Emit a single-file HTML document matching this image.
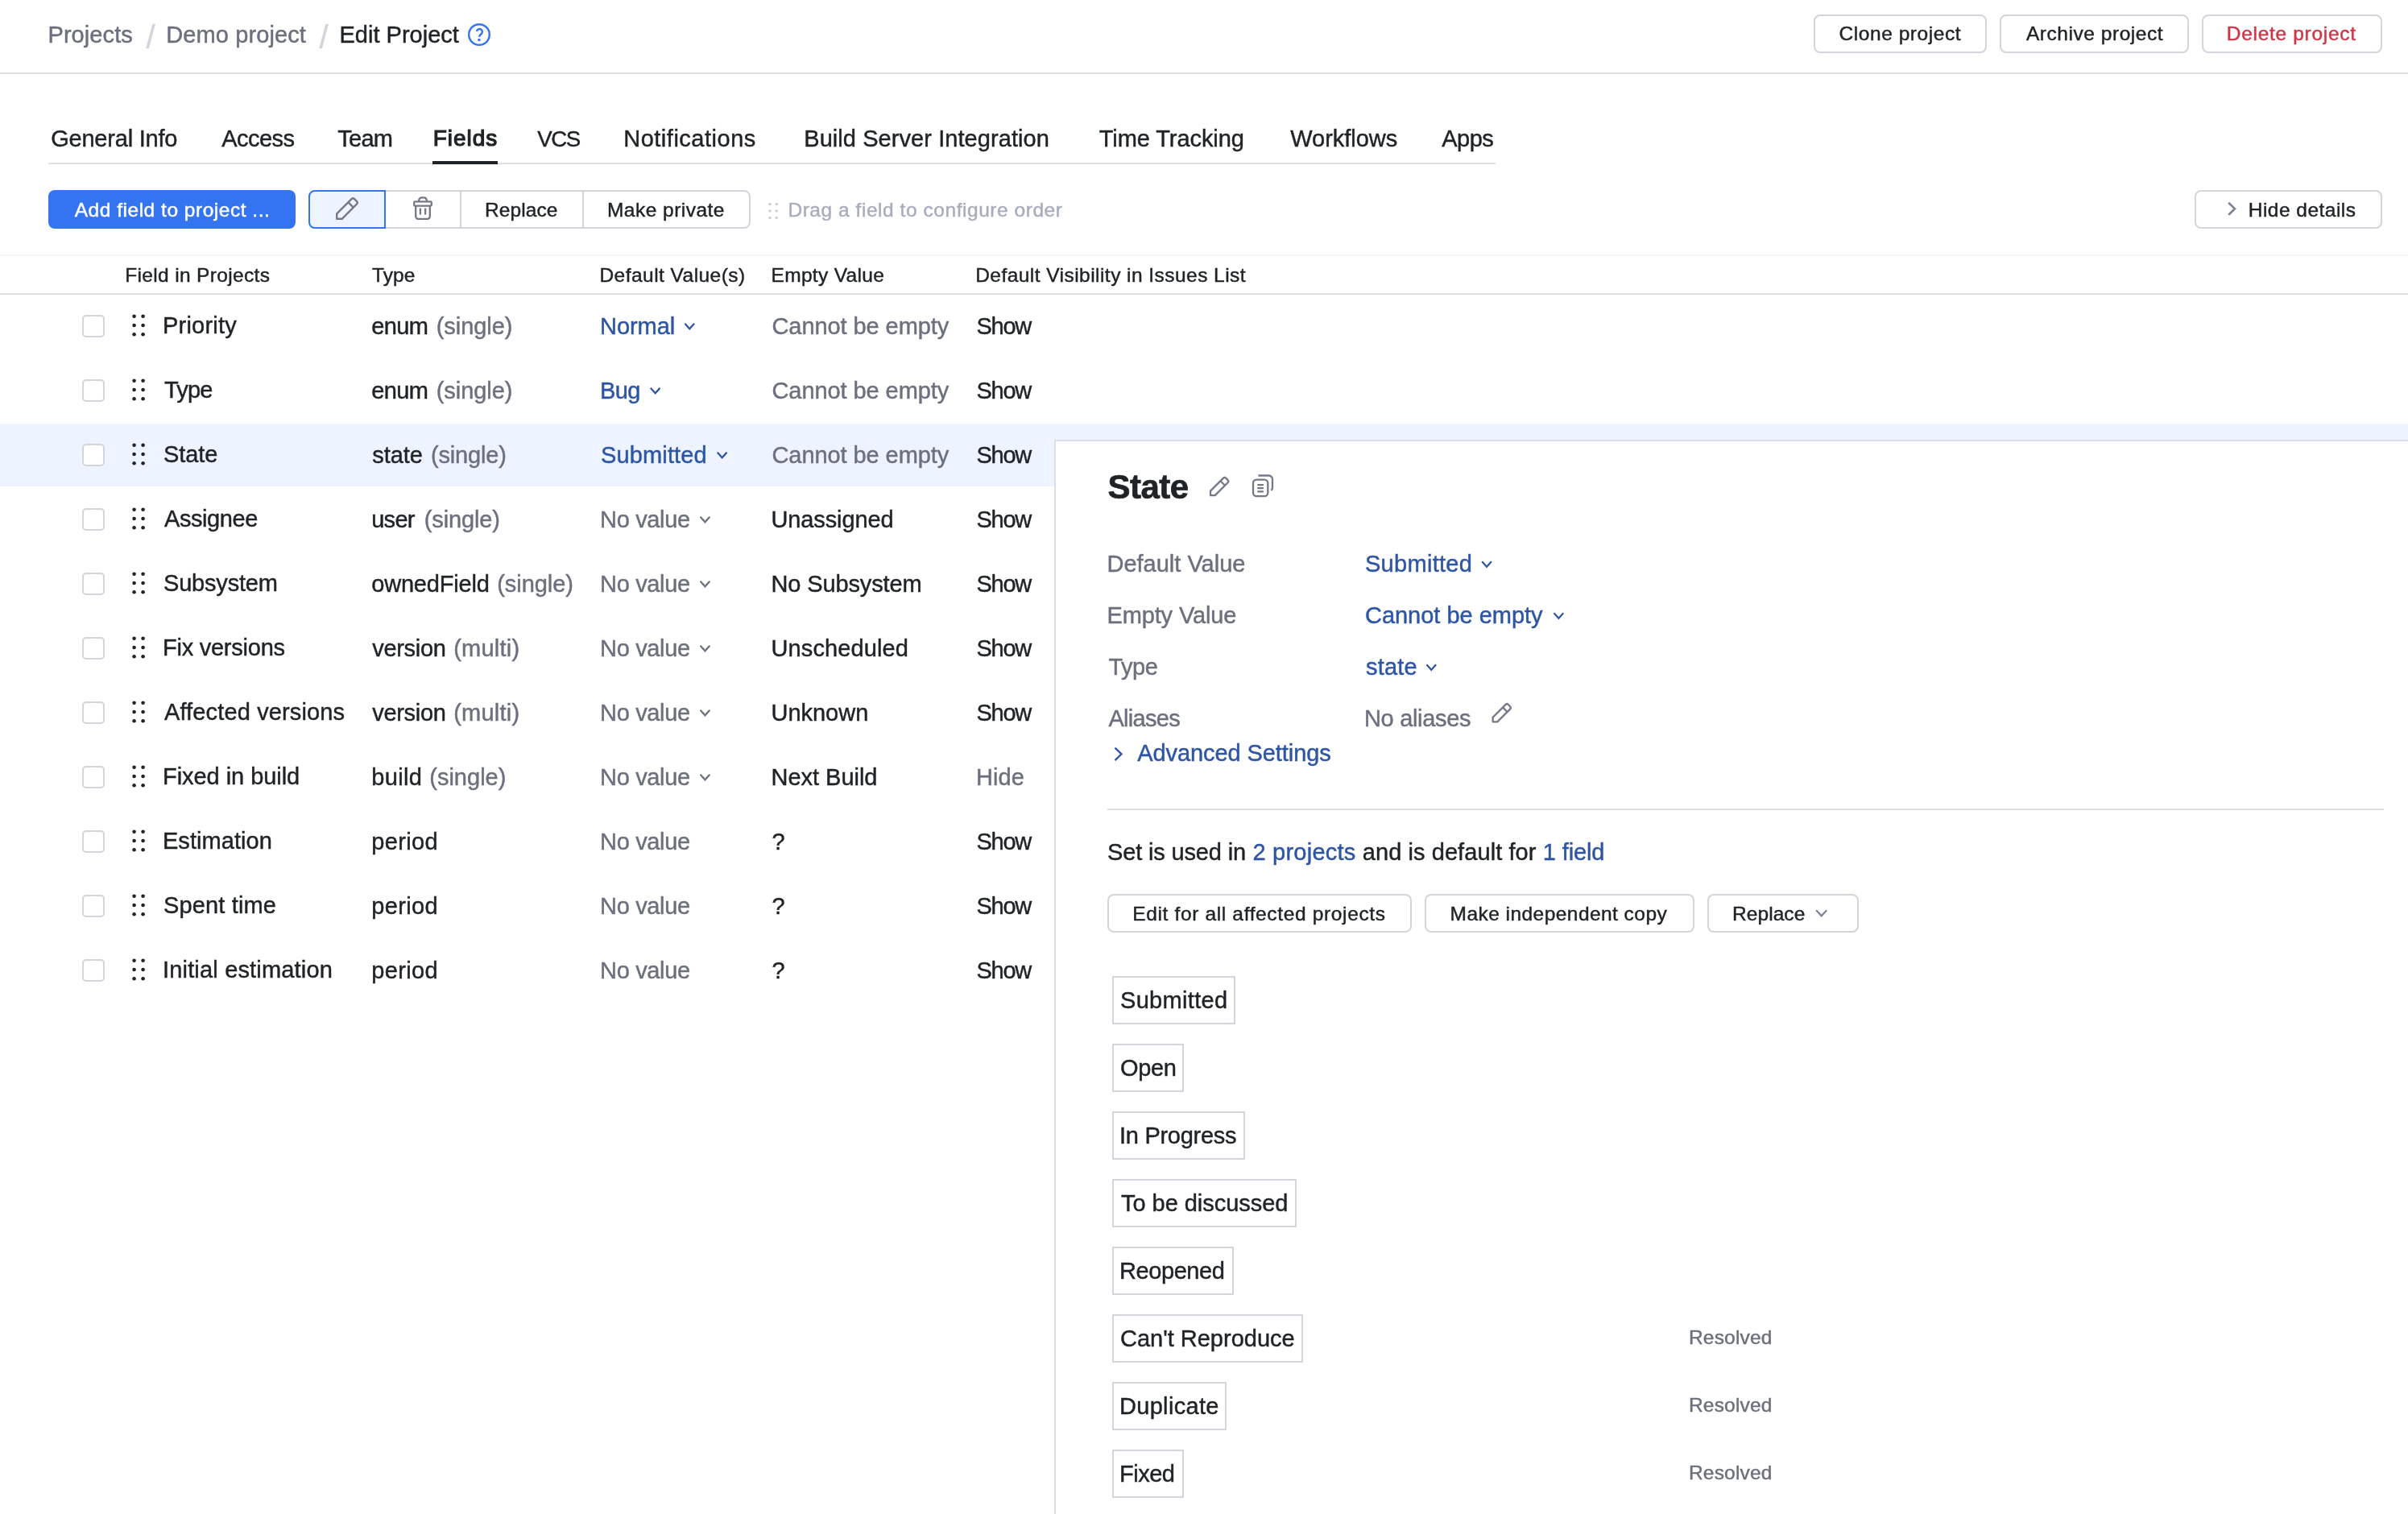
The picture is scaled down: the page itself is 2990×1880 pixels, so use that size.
<!DOCTYPE html>
<html lang="en"><head><meta charset="utf-8"><title>Edit Project - Fields</title>
<style>
html,body{margin:0;padding:0;background:#fff}
@media (max-width:1600px){body{zoom:0.5}}
body{width:2990px;height:1880px;position:relative;overflow:hidden;font-family:"Liberation Sans",sans-serif;color:#1F2326}
.b{position:absolute;box-sizing:content-box}
.btn{border:2px solid #D3D5DB;border-radius:8px;box-sizing:border-box;background:#fff}
.t{position:absolute;white-space:pre;margin:0;padding:0;font-weight:400;-webkit-text-stroke:0.45px currentColor}
svg.ov{position:absolute;left:0;top:0;pointer-events:none}
#txt{position:absolute;left:0;top:0;width:2990px;height:1880px;will-change:transform}
</style></head><body>
<div class="b btn" style="left:2252px;top:18px;width:215px;height:48px;"></div>
<div class="b btn" style="left:2483px;top:18px;width:235px;height:48px;"></div>
<div class="b btn" style="left:2734px;top:18px;width:224px;height:48px;"></div>
<div class="b " style="left:0px;top:90px;width:2990px;height:2px;background:#DFE1E5"></div>
<div class="b " style="left:60px;top:202px;width:1797px;height:2px;background:#DFE1E5"></div>
<div class="b " style="left:537px;top:200px;width:81px;height:4px;background:#1F2326"></div>
<div class="b " style="left:60px;top:236px;width:307px;height:48px;background:#3574F0;border-radius:8px"></div>
<div class="b " style="left:383px;top:236px;width:549px;height:48px;border:2px solid #D3D5DB;border-radius:8px;box-sizing:border-box"></div>
<div class="b " style="left:571px;top:238px;width:2px;height:44px;background:#D3D5DB"></div>
<div class="b " style="left:723px;top:238px;width:2px;height:44px;background:#D3D5DB"></div>
<div class="b " style="left:383px;top:236px;width:96px;height:48px;border:2px solid #3574F0;background:#EDF3FF;border-radius:8px 0 0 8px;box-sizing:border-box"></div>
<div class="b btn" style="left:2725px;top:236px;width:233px;height:48px;"></div>
<div class="b " style="left:0px;top:316px;width:2990px;height:2px;background:#F3F4F6"></div>
<div class="b " style="left:0px;top:364px;width:2990px;height:2px;background:#DFE1E5"></div>
<div class="b " style="left:0px;top:526px;width:2990px;height:78px;background:#EDF3FF"></div>
<div class="b " style="left:102px;top:391px;width:28px;height:28px;border:2px solid #D3D5DB;border-radius:5px;box-sizing:border-box;background:#fff"></div>
<div class="b " style="left:102px;top:471px;width:28px;height:28px;border:2px solid #D3D5DB;border-radius:5px;box-sizing:border-box;background:#fff"></div>
<div class="b " style="left:102px;top:551px;width:28px;height:28px;border:2px solid #D3D5DB;border-radius:5px;box-sizing:border-box;background:#fff"></div>
<div class="b " style="left:102px;top:631px;width:28px;height:28px;border:2px solid #D3D5DB;border-radius:5px;box-sizing:border-box;background:#fff"></div>
<div class="b " style="left:102px;top:711px;width:28px;height:28px;border:2px solid #D3D5DB;border-radius:5px;box-sizing:border-box;background:#fff"></div>
<div class="b " style="left:102px;top:791px;width:28px;height:28px;border:2px solid #D3D5DB;border-radius:5px;box-sizing:border-box;background:#fff"></div>
<div class="b " style="left:102px;top:871px;width:28px;height:28px;border:2px solid #D3D5DB;border-radius:5px;box-sizing:border-box;background:#fff"></div>
<div class="b " style="left:102px;top:951px;width:28px;height:28px;border:2px solid #D3D5DB;border-radius:5px;box-sizing:border-box;background:#fff"></div>
<div class="b " style="left:102px;top:1031px;width:28px;height:28px;border:2px solid #D3D5DB;border-radius:5px;box-sizing:border-box;background:#fff"></div>
<div class="b " style="left:102px;top:1111px;width:28px;height:28px;border:2px solid #D3D5DB;border-radius:5px;box-sizing:border-box;background:#fff"></div>
<div class="b " style="left:102px;top:1191px;width:28px;height:28px;border:2px solid #D3D5DB;border-radius:5px;box-sizing:border-box;background:#fff"></div>
<div class="b " style="left:1309px;top:546px;width:1700px;height:1400px;background:#fff;border:2px solid #DCDEE3;box-sizing:border-box"></div>
<div class="b " style="left:1375px;top:1004px;width:1585px;height:2px;background:#DFE1E5"></div>
<div class="b btn" style="left:1375px;top:1110px;width:377.5px;height:48px;"></div>
<div class="b btn" style="left:1769px;top:1110px;width:335px;height:48px;"></div>
<div class="b btn" style="left:2120px;top:1110px;width:188px;height:48px;"></div>
<div class="b " style="left:1381px;top:1212px;width:153px;height:59.5px;border:2px solid #D3D5DB;box-sizing:border-box"></div>
<div class="b " style="left:1381px;top:1296px;width:89px;height:59.5px;border:2px solid #D3D5DB;box-sizing:border-box"></div>
<div class="b " style="left:1381px;top:1380px;width:165px;height:59.5px;border:2px solid #D3D5DB;box-sizing:border-box"></div>
<div class="b " style="left:1381px;top:1464px;width:229px;height:59.5px;border:2px solid #D3D5DB;box-sizing:border-box"></div>
<div class="b " style="left:1381px;top:1548px;width:151px;height:59.5px;border:2px solid #D3D5DB;box-sizing:border-box"></div>
<div class="b " style="left:1381px;top:1632px;width:237px;height:59.5px;border:2px solid #D3D5DB;box-sizing:border-box"></div>
<div class="b " style="left:1381px;top:1716px;width:142px;height:59.5px;border:2px solid #D3D5DB;box-sizing:border-box"></div>
<div class="b " style="left:1381px;top:1800px;width:89px;height:59.5px;border:2px solid #D3D5DB;box-sizing:border-box"></div>
<svg class="ov" width="2990" height="1880" viewBox="0 0 2990 1880">
<circle cx="595" cy="43" r="12.8" fill="none" stroke="#3574F0" stroke-width="2.4"/>
<path d="M592 38.9 a3.45 3.45 0 1 1 5.9 2.9 c-1.4 1.3 -2.6 2.2 -3 4" fill="none" stroke="#3574F0" stroke-width="2.4"/>
<circle cx="594.9" cy="49.5" r="1.8" fill="#3574F0"/>
<g transform="translate(417,245) scale(1.0)" fill="none" stroke="#747889" stroke-width="2.40" stroke-linejoin="round"><path d="M1.2 20.4 L19.5 2.1 a2.6 2.6 0 0 1 3.6 0 L25.9 4.9 a2.6 2.6 0 0 1 0 3.6 L7.6 26.8 H1.2 Z"/><path d="M15.4 6.2 L21.8 12.6"/></g>
<g transform="translate(513,244.2)" fill="none" stroke="#747889" stroke-width="2.3" stroke-linejoin="round"><path d="M7.2 6 V4.6 a3.4 3.4 0 0 1 3.4 -3.4 h2.8 a3.4 3.4 0 0 1 3.4 3.4 V6"/><rect x="1.2" y="6.2" width="21.6" height="5.2" rx="1"/><path d="M3.2 11.6 V24.6 a3 3 0 0 0 3 3 h11.6 a3 3 0 0 0 3 -3 V11.6"/><path d="M8.9 14.4 V22.4 M15.1 14.4 V22.4"/></g>
<circle cx="955.9" cy="253.4" r="1.7" fill="#C9CCD6"/>
<circle cx="955.9" cy="261.9" r="1.7" fill="#C9CCD6"/>
<circle cx="955.9" cy="270.4" r="1.7" fill="#C9CCD6"/>
<circle cx="964.3" cy="253.4" r="1.7" fill="#C9CCD6"/>
<circle cx="964.3" cy="261.9" r="1.7" fill="#C9CCD6"/>
<circle cx="964.3" cy="270.4" r="1.7" fill="#C9CCD6"/>
<polyline points="2767.20,251.80 2775.00,259.30 2767.20,266.80" fill="none" stroke="#7E8296" stroke-width="2.6"/>
<circle cx="166.6" cy="392.7" r="2.3" fill="#1F2326"/>
<circle cx="166.6" cy="404.0" r="2.3" fill="#1F2326"/>
<circle cx="166.6" cy="415.3" r="2.3" fill="#1F2326"/>
<circle cx="177.6" cy="392.7" r="2.3" fill="#1F2326"/>
<circle cx="177.6" cy="404.0" r="2.3" fill="#1F2326"/>
<circle cx="177.6" cy="415.3" r="2.3" fill="#1F2326"/>
<polyline points="850.40,401.70 856.25,408.30 862.10,401.70" fill="none" stroke="#2E55A3" stroke-width="2.2"/>
<circle cx="166.6" cy="472.7" r="2.3" fill="#1F2326"/>
<circle cx="166.6" cy="484.0" r="2.3" fill="#1F2326"/>
<circle cx="166.6" cy="495.3" r="2.3" fill="#1F2326"/>
<circle cx="177.6" cy="472.7" r="2.3" fill="#1F2326"/>
<circle cx="177.6" cy="484.0" r="2.3" fill="#1F2326"/>
<circle cx="177.6" cy="495.3" r="2.3" fill="#1F2326"/>
<polyline points="807.80,481.70 813.65,488.30 819.50,481.70" fill="none" stroke="#2E55A3" stroke-width="2.2"/>
<circle cx="166.6" cy="552.7" r="2.3" fill="#1F2326"/>
<circle cx="166.6" cy="564.0" r="2.3" fill="#1F2326"/>
<circle cx="166.6" cy="575.3" r="2.3" fill="#1F2326"/>
<circle cx="177.6" cy="552.7" r="2.3" fill="#1F2326"/>
<circle cx="177.6" cy="564.0" r="2.3" fill="#1F2326"/>
<circle cx="177.6" cy="575.3" r="2.3" fill="#1F2326"/>
<polyline points="890.80,561.70 896.65,568.30 902.50,561.70" fill="none" stroke="#2E55A3" stroke-width="2.2"/>
<circle cx="166.6" cy="632.7" r="2.3" fill="#1F2326"/>
<circle cx="166.6" cy="644.0" r="2.3" fill="#1F2326"/>
<circle cx="166.6" cy="655.3" r="2.3" fill="#1F2326"/>
<circle cx="177.6" cy="632.7" r="2.3" fill="#1F2326"/>
<circle cx="177.6" cy="644.0" r="2.3" fill="#1F2326"/>
<circle cx="177.6" cy="655.3" r="2.3" fill="#1F2326"/>
<polyline points="869.60,641.70 875.45,648.30 881.30,641.70" fill="none" stroke="#6C707E" stroke-width="2.2"/>
<circle cx="166.6" cy="712.7" r="2.3" fill="#1F2326"/>
<circle cx="166.6" cy="724.0" r="2.3" fill="#1F2326"/>
<circle cx="166.6" cy="735.3" r="2.3" fill="#1F2326"/>
<circle cx="177.6" cy="712.7" r="2.3" fill="#1F2326"/>
<circle cx="177.6" cy="724.0" r="2.3" fill="#1F2326"/>
<circle cx="177.6" cy="735.3" r="2.3" fill="#1F2326"/>
<polyline points="869.60,721.70 875.45,728.30 881.30,721.70" fill="none" stroke="#6C707E" stroke-width="2.2"/>
<circle cx="166.6" cy="792.7" r="2.3" fill="#1F2326"/>
<circle cx="166.6" cy="804.0" r="2.3" fill="#1F2326"/>
<circle cx="166.6" cy="815.3" r="2.3" fill="#1F2326"/>
<circle cx="177.6" cy="792.7" r="2.3" fill="#1F2326"/>
<circle cx="177.6" cy="804.0" r="2.3" fill="#1F2326"/>
<circle cx="177.6" cy="815.3" r="2.3" fill="#1F2326"/>
<polyline points="869.60,801.70 875.45,808.30 881.30,801.70" fill="none" stroke="#6C707E" stroke-width="2.2"/>
<circle cx="166.6" cy="872.7" r="2.3" fill="#1F2326"/>
<circle cx="166.6" cy="884.0" r="2.3" fill="#1F2326"/>
<circle cx="166.6" cy="895.3" r="2.3" fill="#1F2326"/>
<circle cx="177.6" cy="872.7" r="2.3" fill="#1F2326"/>
<circle cx="177.6" cy="884.0" r="2.3" fill="#1F2326"/>
<circle cx="177.6" cy="895.3" r="2.3" fill="#1F2326"/>
<polyline points="869.60,881.70 875.45,888.30 881.30,881.70" fill="none" stroke="#6C707E" stroke-width="2.2"/>
<circle cx="166.6" cy="952.7" r="2.3" fill="#1F2326"/>
<circle cx="166.6" cy="964.0" r="2.3" fill="#1F2326"/>
<circle cx="166.6" cy="975.3" r="2.3" fill="#1F2326"/>
<circle cx="177.6" cy="952.7" r="2.3" fill="#1F2326"/>
<circle cx="177.6" cy="964.0" r="2.3" fill="#1F2326"/>
<circle cx="177.6" cy="975.3" r="2.3" fill="#1F2326"/>
<polyline points="869.60,961.70 875.45,968.30 881.30,961.70" fill="none" stroke="#6C707E" stroke-width="2.2"/>
<circle cx="166.6" cy="1032.7" r="2.3" fill="#1F2326"/>
<circle cx="166.6" cy="1044.0" r="2.3" fill="#1F2326"/>
<circle cx="166.6" cy="1055.3" r="2.3" fill="#1F2326"/>
<circle cx="177.6" cy="1032.7" r="2.3" fill="#1F2326"/>
<circle cx="177.6" cy="1044.0" r="2.3" fill="#1F2326"/>
<circle cx="177.6" cy="1055.3" r="2.3" fill="#1F2326"/>
<circle cx="166.6" cy="1112.7" r="2.3" fill="#1F2326"/>
<circle cx="166.6" cy="1124.0" r="2.3" fill="#1F2326"/>
<circle cx="166.6" cy="1135.3" r="2.3" fill="#1F2326"/>
<circle cx="177.6" cy="1112.7" r="2.3" fill="#1F2326"/>
<circle cx="177.6" cy="1124.0" r="2.3" fill="#1F2326"/>
<circle cx="177.6" cy="1135.3" r="2.3" fill="#1F2326"/>
<circle cx="166.6" cy="1192.7" r="2.3" fill="#1F2326"/>
<circle cx="166.6" cy="1204.0" r="2.3" fill="#1F2326"/>
<circle cx="166.6" cy="1215.3" r="2.3" fill="#1F2326"/>
<circle cx="177.6" cy="1192.7" r="2.3" fill="#1F2326"/>
<circle cx="177.6" cy="1204.0" r="2.3" fill="#1F2326"/>
<circle cx="177.6" cy="1215.3" r="2.3" fill="#1F2326"/>
<g transform="translate(1502,591.8) scale(0.8714285714285713)" fill="none" stroke="#747889" stroke-width="2.64" stroke-linejoin="round"><path d="M1.2 20.4 L19.5 2.1 a2.6 2.6 0 0 1 3.6 0 L25.9 4.9 a2.6 2.6 0 0 1 0 3.6 L7.6 26.8 H1.2 Z"/><path d="M15.4 6.2 L21.8 12.6"/></g>
<g transform="translate(1555,589.3)" fill="none" stroke="#747889" stroke-width="2.3"><rect x="1" y="6.3" width="18.3" height="20.5" rx="4.2"/><path d="M7.4 1.2 H20.4 a4.6 4.6 0 0 1 4.6 4.6 V16 a4.6 4.6 0 0 1 -1.6 3.6" stroke-linecap="butt"/><path d="M6.3 12.9 H13.9 M6.3 16.9 H13.9 M6.3 21 H13.9"/></g>
<polyline points="1840.20,697.20 1846.05,703.80 1851.90,697.20" fill="none" stroke="#2E55A3" stroke-width="2.2"/>
<polyline points="1929.50,761.20 1935.35,767.80 1941.20,761.20" fill="none" stroke="#2E55A3" stroke-width="2.2"/>
<polyline points="1771.40,825.20 1777.25,831.80 1783.10,825.20" fill="none" stroke="#2E55A3" stroke-width="2.2"/>
<g transform="translate(1852.6,873) scale(0.8714285714285713)" fill="none" stroke="#747889" stroke-width="2.64" stroke-linejoin="round"><path d="M1.2 20.4 L19.5 2.1 a2.6 2.6 0 0 1 3.6 0 L25.9 4.9 a2.6 2.6 0 0 1 0 3.6 L7.6 26.8 H1.2 Z"/><path d="M15.4 6.2 L21.8 12.6"/></g>
<polyline points="1384.50,928.55 1392.50,936.30 1384.50,944.05" fill="none" stroke="#2E55A3" stroke-width="2.3"/>
<polyline points="2255.20,1130.30 2261.70,1137.30 2268.20,1130.30" fill="none" stroke="#7E8296" stroke-width="2.2"/>
</svg>
<div id="txt">
<span class="t" style="left:59.48px;top:27px;font-size:29px;line-height:32px;letter-spacing:0.078px;color:#6C707E">Projects</span>
<span class="t" style="left:181.42px;top:24px;font-size:40px;line-height:44px;letter-spacing:0.000px;color:#D3D5DB">/</span>
<span class="t" style="left:206.22px;top:27px;font-size:29px;line-height:32px;letter-spacing:0.105px;color:#6C707E">Demo project</span>
<span class="t" style="left:396.53px;top:24px;font-size:40px;line-height:44px;letter-spacing:0.000px;color:#D3D5DB">/</span>
<span class="t" style="left:421.48px;top:27px;font-size:29px;line-height:32px;letter-spacing:0.007px;color:#1F2326">Edit Project</span>
<span class="t" style="left:2283.53px;top:28px;font-size:24.5px;line-height:27px;letter-spacing:0.558px;color:#1F2326">Clone project</span>
<span class="t" style="left:2515.92px;top:28px;font-size:24.5px;line-height:27px;letter-spacing:0.544px;color:#1F2326">Archive project</span>
<span class="t" style="left:2764.82px;top:28px;font-size:24.5px;line-height:27px;letter-spacing:0.692px;color:#CC3645">Delete project</span>
<span class="t" style="left:63.23px;top:156px;font-size:29px;line-height:32px;letter-spacing:-0.220px;color:#1F2326">General Info</span>
<span class="t" style="left:275.23px;top:156px;font-size:29px;line-height:32px;letter-spacing:-0.534px;color:#1F2326">Access</span>
<span class="t" style="left:419.23px;top:156px;font-size:29px;line-height:32px;letter-spacing:-0.736px;color:#1F2326">Team</span>
<span class="t" style="left:537.80px;top:156px;font-size:28px;line-height:31px;letter-spacing:0.942px;color:#1F2326;-webkit-text-stroke-width:1.2px">Fields</span>
<span class="t" style="left:667.23px;top:157px;font-size:27.6px;line-height:31px;letter-spacing:-1.391px;color:#1F2326">VCS</span>
<span class="t" style="left:774.23px;top:156px;font-size:29px;line-height:32px;letter-spacing:0.508px;color:#1F2326">Notifications</span>
<span class="t" style="left:998.23px;top:156px;font-size:29px;line-height:32px;letter-spacing:0.071px;color:#1F2326">Build Server Integration</span>
<span class="t" style="left:1364.72px;top:156px;font-size:29px;line-height:32px;letter-spacing:-0.072px;color:#1F2326">Time Tracking</span>
<span class="t" style="left:1602.22px;top:156px;font-size:29px;line-height:32px;letter-spacing:-0.019px;color:#1F2326">Workflows</span>
<span class="t" style="left:1790.22px;top:156px;font-size:29px;line-height:32px;letter-spacing:-0.517px;color:#1F2326">Apps</span>
<span class="t" style="left:92.72px;top:247px;font-size:24.5px;line-height:27px;letter-spacing:0.520px;color:#FFFFFF">Add field to project ...</span>
<span class="t" style="left:601.98px;top:247px;font-size:24.5px;line-height:27px;letter-spacing:0.089px;color:#1F2326">Replace</span>
<span class="t" style="left:753.98px;top:247px;font-size:24.5px;line-height:27px;letter-spacing:0.470px;color:#1F2326">Make private</span>
<span class="t" style="left:978.43px;top:247px;font-size:24.5px;line-height:27px;letter-spacing:0.546px;color:#A8ADBD">Drag a field to configure order</span>
<span class="t" style="left:2791.72px;top:247px;font-size:24.5px;line-height:27px;letter-spacing:0.480px;color:#1F2326">Hide details</span>
<span class="t" style="left:155.22px;top:328px;font-size:24.5px;line-height:27px;letter-spacing:0.345px;color:#1F2326">Field in Projects</span>
<span class="t" style="left:461.98px;top:328px;font-size:24.5px;line-height:27px;letter-spacing:0.103px;color:#1F2326">Type</span>
<span class="t" style="left:744.48px;top:328px;font-size:24.5px;line-height:27px;letter-spacing:0.458px;color:#1F2326">Default Value(s)</span>
<span class="t" style="left:957.48px;top:328px;font-size:24.5px;line-height:27px;letter-spacing:0.334px;color:#1F2326">Empty Value</span>
<span class="t" style="left:1211.22px;top:328px;font-size:24.5px;line-height:27px;letter-spacing:0.452px;color:#1F2326">Default Visibility in Issues List</span>
<span class="t" style="left:201.97px;top:388px;font-size:29px;line-height:32px;letter-spacing:0.224px;color:#1F2326">Priority</span>
<span class="t" style="left:461.23px;top:389px;font-size:29px;line-height:32px;letter-spacing:-0.612px;color:#1F2326">enum</span>
<span class="t" style="left:541.73px;top:389px;font-size:29px;line-height:32px;letter-spacing:-0.054px;color:#6C707E">(single)</span>
<span class="t" style="left:745.02px;top:389px;font-size:29px;line-height:32px;letter-spacing:-0.053px;color:#2E55A3">Normal</span>
<span class="t" style="left:958.48px;top:389px;font-size:29px;line-height:32px;letter-spacing:-0.075px;color:#6C707E">Cannot be empty</span>
<span class="t" style="left:1212.52px;top:389px;font-size:29px;line-height:32px;letter-spacing:-1.250px;color:#1F2326">Show</span>
<span class="t" style="left:203.97px;top:468px;font-size:29px;line-height:32px;letter-spacing:-0.814px;color:#1F2326">Type</span>
<span class="t" style="left:461.23px;top:469px;font-size:29px;line-height:32px;letter-spacing:-0.612px;color:#1F2326">enum</span>
<span class="t" style="left:541.73px;top:469px;font-size:29px;line-height:32px;letter-spacing:-0.054px;color:#6C707E">(single)</span>
<span class="t" style="left:745.02px;top:469px;font-size:29px;line-height:32px;letter-spacing:-0.611px;color:#2E55A3">Bug</span>
<span class="t" style="left:958.48px;top:469px;font-size:29px;line-height:32px;letter-spacing:-0.075px;color:#6C707E">Cannot be empty</span>
<span class="t" style="left:1212.52px;top:469px;font-size:29px;line-height:32px;letter-spacing:-1.250px;color:#1F2326">Show</span>
<span class="t" style="left:202.97px;top:548px;font-size:29px;line-height:32px;letter-spacing:-0.071px;color:#1F2326">State</span>
<span class="t" style="left:462.23px;top:549px;font-size:29px;line-height:32px;letter-spacing:-0.048px;color:#1F2326">state</span>
<span class="t" style="left:534.98px;top:549px;font-size:29px;line-height:32px;letter-spacing:-0.161px;color:#6C707E">(single)</span>
<span class="t" style="left:746.02px;top:549px;font-size:29px;line-height:32px;letter-spacing:0.132px;color:#2E55A3">Submitted</span>
<span class="t" style="left:958.48px;top:549px;font-size:29px;line-height:32px;letter-spacing:-0.075px;color:#6C707E">Cannot be empty</span>
<span class="t" style="left:1212.52px;top:549px;font-size:29px;line-height:32px;letter-spacing:-1.250px;color:#1F2326">Show</span>
<span class="t" style="left:203.97px;top:628px;font-size:29px;line-height:32px;letter-spacing:-0.410px;color:#1F2326">Assignee</span>
<span class="t" style="left:461.23px;top:629px;font-size:29px;line-height:32px;letter-spacing:-0.736px;color:#1F2326">user</span>
<span class="t" style="left:526.73px;top:629px;font-size:29px;line-height:32px;letter-spacing:-0.125px;color:#6C707E">(single)</span>
<span class="t" style="left:745.02px;top:629px;font-size:29px;line-height:32px;letter-spacing:-0.333px;color:#6C707E">No value</span>
<span class="t" style="left:957.48px;top:629px;font-size:29px;line-height:32px;letter-spacing:-0.109px;color:#1F2326">Unassigned</span>
<span class="t" style="left:1212.52px;top:629px;font-size:29px;line-height:32px;letter-spacing:-1.250px;color:#1F2326">Show</span>
<span class="t" style="left:202.97px;top:708px;font-size:29px;line-height:32px;letter-spacing:-0.186px;color:#1F2326">Subsystem</span>
<span class="t" style="left:461.23px;top:709px;font-size:29px;line-height:32px;letter-spacing:-0.182px;color:#1F2326">ownedField</span>
<span class="t" style="left:617.23px;top:709px;font-size:29px;line-height:32px;letter-spacing:-0.054px;color:#6C707E">(single)</span>
<span class="t" style="left:745.02px;top:709px;font-size:29px;line-height:32px;letter-spacing:-0.333px;color:#6C707E">No value</span>
<span class="t" style="left:957.48px;top:709px;font-size:29px;line-height:32px;letter-spacing:-0.124px;color:#1F2326">No Subsystem</span>
<span class="t" style="left:1212.52px;top:709px;font-size:29px;line-height:32px;letter-spacing:-1.250px;color:#1F2326">Show</span>
<span class="t" style="left:201.97px;top:788px;font-size:29px;line-height:32px;letter-spacing:-0.241px;color:#1F2326">Fix versions</span>
<span class="t" style="left:462.23px;top:789px;font-size:29px;line-height:32px;letter-spacing:-0.301px;color:#1F2326">version</span>
<span class="t" style="left:563.23px;top:789px;font-size:29px;line-height:32px;letter-spacing:0.236px;color:#6C707E">(multi)</span>
<span class="t" style="left:745.02px;top:789px;font-size:29px;line-height:32px;letter-spacing:-0.333px;color:#6C707E">No value</span>
<span class="t" style="left:957.48px;top:789px;font-size:29px;line-height:32px;letter-spacing:0.114px;color:#1F2326">Unscheduled</span>
<span class="t" style="left:1212.52px;top:789px;font-size:29px;line-height:32px;letter-spacing:-1.250px;color:#1F2326">Show</span>
<span class="t" style="left:203.97px;top:868px;font-size:29px;line-height:32px;letter-spacing:0.136px;color:#1F2326">Affected versions</span>
<span class="t" style="left:462.23px;top:869px;font-size:29px;line-height:32px;letter-spacing:-0.301px;color:#1F2326">version</span>
<span class="t" style="left:563.23px;top:869px;font-size:29px;line-height:32px;letter-spacing:0.236px;color:#6C707E">(multi)</span>
<span class="t" style="left:745.02px;top:869px;font-size:29px;line-height:32px;letter-spacing:-0.333px;color:#6C707E">No value</span>
<span class="t" style="left:957.48px;top:869px;font-size:29px;line-height:32px;letter-spacing:-0.012px;color:#1F2326">Unknown</span>
<span class="t" style="left:1212.52px;top:869px;font-size:29px;line-height:32px;letter-spacing:-1.250px;color:#1F2326">Show</span>
<span class="t" style="left:201.97px;top:948px;font-size:29px;line-height:32px;letter-spacing:-0.049px;color:#1F2326">Fixed in build</span>
<span class="t" style="left:461.23px;top:949px;font-size:29px;line-height:32px;letter-spacing:0.352px;color:#1F2326">build</span>
<span class="t" style="left:533.23px;top:949px;font-size:29px;line-height:32px;letter-spacing:0.017px;color:#6C707E">(single)</span>
<span class="t" style="left:745.02px;top:949px;font-size:29px;line-height:32px;letter-spacing:-0.333px;color:#6C707E">No value</span>
<span class="t" style="left:957.48px;top:949px;font-size:29px;line-height:32px;letter-spacing:-0.016px;color:#1F2326">Next Build</span>
<span class="t" style="left:1212.02px;top:949px;font-size:29px;line-height:32px;letter-spacing:0.079px;color:#6C707E">Hide</span>
<span class="t" style="left:201.97px;top:1028px;font-size:29px;line-height:32px;letter-spacing:0.060px;color:#1F2326">Estimation</span>
<span class="t" style="left:461.23px;top:1029px;font-size:29px;line-height:32px;letter-spacing:0.353px;color:#1F2326">period</span>
<span class="t" style="left:745.02px;top:1029px;font-size:29px;line-height:32px;letter-spacing:-0.333px;color:#6C707E">No value</span>
<span class="t" style="left:958.48px;top:1029px;font-size:29px;line-height:32px;letter-spacing:0.000px;color:#1F2326">?</span>
<span class="t" style="left:1212.52px;top:1029px;font-size:29px;line-height:32px;letter-spacing:-1.250px;color:#1F2326">Show</span>
<span class="t" style="left:202.97px;top:1108px;font-size:29px;line-height:32px;letter-spacing:0.144px;color:#1F2326">Spent time</span>
<span class="t" style="left:461.23px;top:1109px;font-size:29px;line-height:32px;letter-spacing:0.353px;color:#1F2326">period</span>
<span class="t" style="left:745.02px;top:1109px;font-size:29px;line-height:32px;letter-spacing:-0.333px;color:#6C707E">No value</span>
<span class="t" style="left:958.48px;top:1109px;font-size:29px;line-height:32px;letter-spacing:0.000px;color:#1F2326">?</span>
<span class="t" style="left:1212.52px;top:1109px;font-size:29px;line-height:32px;letter-spacing:-1.250px;color:#1F2326">Show</span>
<span class="t" style="left:201.97px;top:1188px;font-size:29px;line-height:32px;letter-spacing:0.177px;color:#1F2326">Initial estimation</span>
<span class="t" style="left:461.23px;top:1189px;font-size:29px;line-height:32px;letter-spacing:0.353px;color:#1F2326">period</span>
<span class="t" style="left:745.02px;top:1189px;font-size:29px;line-height:32px;letter-spacing:-0.333px;color:#6C707E">No value</span>
<span class="t" style="left:958.48px;top:1189px;font-size:29px;line-height:32px;letter-spacing:0.000px;color:#1F2326">?</span>
<span class="t" style="left:1212.52px;top:1189px;font-size:29px;line-height:32px;letter-spacing:-1.250px;color:#1F2326">Show</span>
<h2 class="t" style="left:1375.55px;top:581px;font-size:42px;line-height:47px;letter-spacing:-0.561px;color:#1F2326;font-weight:700;-webkit-text-stroke-width:0.7px">State</h2>
<span class="t" style="left:1374.47px;top:684px;font-size:29px;line-height:32px;letter-spacing:-0.003px;color:#6C707E">Default Value</span>
<span class="t" style="left:1374.47px;top:748px;font-size:29px;line-height:32px;letter-spacing:-0.133px;color:#6C707E">Empty Value</span>
<span class="t" style="left:1376.47px;top:812px;font-size:29px;line-height:32px;letter-spacing:-0.481px;color:#6C707E">Type</span>
<span class="t" style="left:1376.47px;top:876px;font-size:29px;line-height:32px;letter-spacing:-0.698px;color:#6C707E">Aliases</span>
<span class="t" style="left:1694.97px;top:684px;font-size:29px;line-height:32px;letter-spacing:0.295px;color:#2E55A3">Submitted</span>
<span class="t" style="left:1694.97px;top:748px;font-size:29px;line-height:32px;letter-spacing:-0.022px;color:#2E55A3">Cannot be empty</span>
<span class="t" style="left:1695.97px;top:812px;font-size:29px;line-height:32px;letter-spacing:0.202px;color:#2E55A3">state</span>
<span class="t" style="left:1693.97px;top:876px;font-size:29px;line-height:32px;letter-spacing:-0.317px;color:#6C707E">No aliases</span>
<span class="t" style="left:1412.22px;top:919px;font-size:29px;line-height:32px;letter-spacing:-0.080px;color:#2E55A3">Advanced Settings</span>
<span class="t" style="left:1374.97px;top:1042px;font-size:29px;line-height:32px;letter-spacing:-0.148px;color:#1F2326">Set is used in</span>
<span class="t" style="left:1555.47px;top:1042px;font-size:29px;line-height:32px;letter-spacing:0.230px;color:#2E55A3">2 projects</span>
<span class="t" style="left:1691.72px;top:1042px;font-size:29px;line-height:32px;letter-spacing:0.076px;color:#1F2326">and is default for</span>
<span class="t" style="left:1915.72px;top:1042px;font-size:29px;line-height:32px;letter-spacing:-0.101px;color:#2E55A3">1 field</span>
<span class="t" style="left:1406.22px;top:1121px;font-size:24.5px;line-height:27px;letter-spacing:0.646px;color:#1F2326">Edit for all affected projects</span>
<span class="t" style="left:1800.62px;top:1121px;font-size:24.5px;line-height:27px;letter-spacing:0.447px;color:#1F2326">Make independent copy</span>
<span class="t" style="left:2151.03px;top:1121px;font-size:24.5px;line-height:27px;letter-spacing:0.064px;color:#1F2326">Replace</span>
<span class="t" style="left:1390.97px;top:1226px;font-size:29px;line-height:32px;letter-spacing:0.326px;color:#1F2326">Submitted</span>
<span class="t" style="left:1390.97px;top:1310px;font-size:29px;line-height:32px;letter-spacing:-0.338px;color:#1F2326">Open</span>
<span class="t" style="left:1389.97px;top:1394px;font-size:29px;line-height:32px;letter-spacing:-0.269px;color:#1F2326">In Progress</span>
<span class="t" style="left:1391.97px;top:1478px;font-size:29px;line-height:32px;letter-spacing:-0.038px;color:#1F2326">To be discussed</span>
<span class="t" style="left:1389.97px;top:1562px;font-size:29px;line-height:32px;letter-spacing:-0.416px;color:#1F2326">Reopened</span>
<span class="t" style="left:1390.97px;top:1646px;font-size:29px;line-height:32px;letter-spacing:-0.003px;color:#1F2326">Can't Reproduce</span>
<span class="t" style="left:2096.97px;top:1647px;font-size:24.5px;line-height:27px;letter-spacing:0.184px;color:#6C707E">Resolved</span>
<span class="t" style="left:1389.97px;top:1730px;font-size:29px;line-height:32px;letter-spacing:0.316px;color:#1F2326">Duplicate</span>
<span class="t" style="left:2096.97px;top:1731px;font-size:24.5px;line-height:27px;letter-spacing:0.184px;color:#6C707E">Resolved</span>
<span class="t" style="left:1389.97px;top:1814px;font-size:29px;line-height:32px;letter-spacing:-0.496px;color:#1F2326">Fixed</span>
<span class="t" style="left:2096.97px;top:1815px;font-size:24.5px;line-height:27px;letter-spacing:0.184px;color:#6C707E">Resolved</span>
</div>
</body></html>
